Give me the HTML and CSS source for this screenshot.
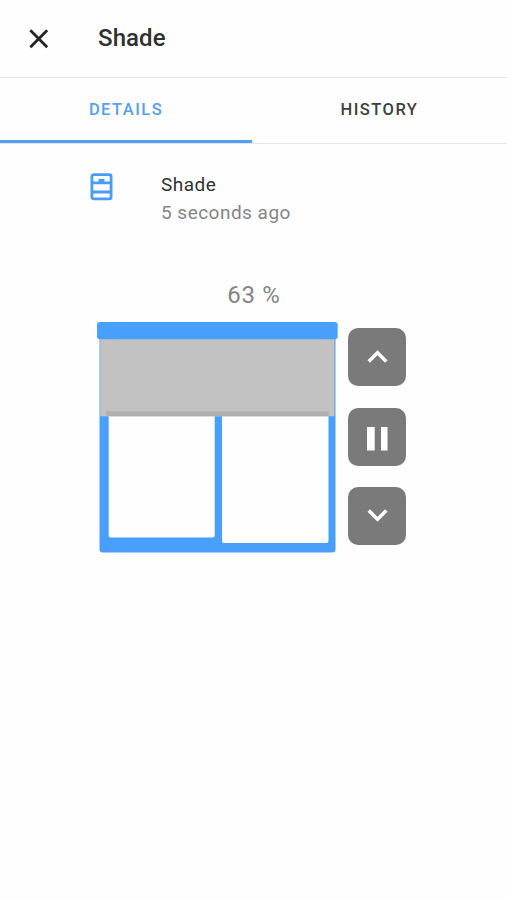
FILE: index.html
```html
<!DOCTYPE html>
<html lang="en">
<head>
<meta charset="utf-8">
<meta name="viewport" content="width=device-width">
<title>Shade</title>
<link rel="stylesheet" href="styles.css">
</head>
<body>
<header class="header">
  <svg class="close" viewBox="0 0 20 20" role="button" aria-label="Close"><path d="M1.3 1.3 18.2 18.2M18.2 1.3 1.3 18.2"/></svg>
  <h1 class="title">Shade</h1>
</header>
<nav class="tabs">
  <a class="tab active"><span>DETAILS</span></a>
  <a class="tab"><span>HISTORY</span></a>
</nav>
<main>
  <section class="entity">
    <svg class="entity-icon" viewBox="0 0 23 28">
      <rect x="1.9" y="1.7" width="19.2" height="24.2" rx="1.8"/>
      <path d="M2 9.8h19M2 19h19"/>
      <path class="fill" d="M8.5 6h6v4h-6z"/>
    </svg>
    <div>
      <div class="name">Shade</div>
      <div class="time">5 seconds ago</div>
    </div>
  </section>
  <div class="position">63 %</div>
  <section class="controls">
    <svg class="window" viewBox="0 0 241 231">
      <rect class="frame" x="2.5" y="8" width="236" height="222.5" rx="3"/>
      <rect class="pane" x="11.7" y="80" width="106" height="135.5" rx="2"/>
      <rect class="pane" x="125" y="80" width="106.5" height="141" rx="2"/>
      <rect class="shade" x="3.2" y="17" width="234.3" height="77.3"/>
      <rect class="hem" x="9" y="89.3" width="223" height="5"/>
      <rect class="frame" x="0" y="0" width="240.7" height="17.3" rx="3"/>
    </svg>
    <div class="buttons">
      <button aria-label="Open"><svg viewBox="0 0 58 58"><path d="m20.7 33.6 8.8-8.8 8.8 8.8"/></svg></button>
      <button aria-label="Stop"><svg viewBox="0 0 58 58"><path class="bar" d="M19 19h7.7v23.5H19zM33 19h6.5v23.5H33z"/></svg></button>
      <button aria-label="Close shade"><svg viewBox="0 0 58 58"><path d="m20.7 23.5 8.8 8.8 8.8-8.8"/></svg></button>
    </div>
  </section>
</main>
</body>
</html>
```
FILE: styles.css
```css
* { box-sizing: border-box; }
body {
  margin: 0;
  min-height: 100vh;
  background: #fefefe;
  color: #303030;
  font-family: Roboto, "Liberation Sans", sans-serif;
}
.header {
  display: flex;
  align-items: center;
  height: 78px;
  padding-left: 29px;
  border-bottom: 1px solid #e3e3e4;
}
.close {
  width: 20px;
  height: 20px;
  fill: none;
  stroke: #252525;
  stroke-width: 2.8;
}
.title {
  margin: 0 0 1px 49px;
  font-size: 24px;
  line-height: 32px;
  font-weight: 500;
  letter-spacing: 0.1px;
}
.tabs {
  display: grid;
  grid-template-columns: 252px 1fr;
  height: 66px;
  border-bottom: 1px solid #e3e5e8;
}
.tab {
  display: flex;
  align-items: center;
  justify-content: center;
  border-bottom: 3px solid transparent;
  padding-top: 1px;
  color: #404040;
  font-size: 16.5px;
  font-weight: 500;
  letter-spacing: 1.45px;
}
.tab.active { color: #559ff5; border-color: #559ff5; }
.entity {
  display: flex;
  padding: 29px 0 0 90px;
}
.entity-icon {
  width: 23px;
  height: 28px;
  margin-right: 48px;
  fill: none;
  stroke: #489cf8;
  stroke-width: 2.8;
}
.entity-icon .fill { fill: #489cf8; stroke: none; }
.name, .time {
  font-size: 19px;
  line-height: 28px;
  letter-spacing: 0.48px;
}
.name { margin-top: -2px; }
.time { color: #858585; }
.position {
  margin-top: 52px;
  padding-left: 1px;
  text-align: center;
  font-size: 24px;
  line-height: 32px;
  letter-spacing: 0.7px;
  color: #858585;
}
.controls {
  display: flex;
  padding: 11px 0 0 97px;
}
.window { width: 241px; height: 231px; }
.frame { fill: #489ffc; }
.pane { fill: #fefefe; }
.shade { fill: #c2c2c2; }
.hem { fill: #b0b0b0; }
.buttons {
  display: flex;
  flex-direction: column;
  gap: 21.5px;
  padding: 6.4px 0 0 10.4px;
}
button {
  width: 58px;
  height: 58px;
  padding: 0;
  border: 0;
  border-radius: 10px;
  background: #7a7a7a;
}
button svg {
  display: block;
  fill: none;
  stroke: #fff;
  stroke-width: 3.5;
}
button .bar { fill: #fff; stroke: none; }
```
